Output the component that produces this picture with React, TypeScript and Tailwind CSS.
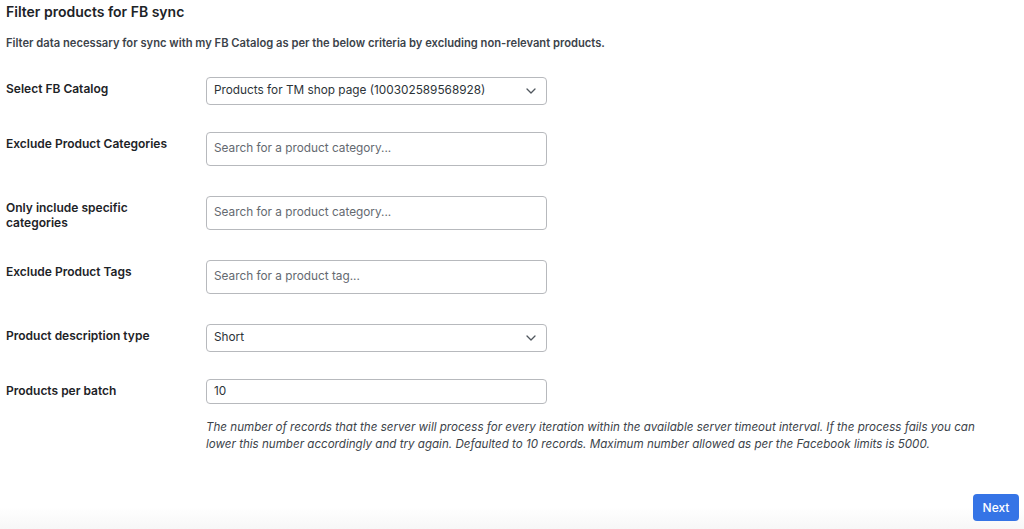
import React from 'react';

const Chevron: React.FC = () => (
  <svg width="10" height="6" viewBox="0 0 10 6" className="shrink-0">
    <path d="M1 1l4 4 4-4" fill="none" stroke="#50575e" strokeWidth="1.3" strokeLinecap="round" strokeLinejoin="round" />
  </svg>
);

const Row: React.FC<{ label: React.ReactNode; gap: string; children: React.ReactNode }> = ({ label, gap, children }) => (
  <div className={`flex ${gap}`}>
    <div className="w-[200px] shrink-0 pt-[4px] text-[12px] leading-[15px] font-semibold text-[#1d2327]">{label}</div>
    <div className="w-[341px]">{children}</div>
  </div>
);

const SelectBox: React.FC<{ value: string }> = ({ value }) => (
  <div className="h-[28px] border border-[#b7b9bd] rounded-[4px] flex items-center justify-between pl-[7px] pr-[10px] text-[11.8px] text-[#2c3338]">
    <span>{value}</span>
    <Chevron />
  </div>
);

const SearchBox: React.FC<{ placeholder: string }> = ({ placeholder }) => (
  <div className="h-[34px] border border-[#b7b9bd] rounded-[4px] flex items-center pl-[7px] text-[11.8px] text-[#646970]">
    {placeholder}
  </div>
);

const App: React.FC = () => {
  return (
    <div className="w-[1024px] h-[529px] bg-white relative overflow-hidden" style={{ fontFamily: 'Inter, "Liberation Sans", sans-serif' }}>
      <div className="pl-[6px] pt-[2px]">
        <h1 className="text-[14px] leading-[20px] font-semibold text-[#1d2327]">Filter products for FB sync</h1>
        <p className="mt-[13px] text-[11.2px] leading-[16px] font-semibold text-[#3c434a]">
          Filter data necessary for sync with my FB Catalog as per the below criteria by excluding non-relevant products.
        </p>

        <div className="mt-[26px] flex flex-col">
          <Row label="Select FB Catalog" gap="">
            <SelectBox value="Products for TM shop page (100302589568928)" />
          </Row>
          <Row label="Exclude Product Categories" gap="mt-[27px]">
            <SearchBox placeholder="Search for a product category..." />
          </Row>
          <Row label={<>Only include specific<br />categories</>} gap="mt-[30px]">
            <SearchBox placeholder="Search for a product category..." />
          </Row>
          <Row label="Exclude Product Tags" gap="mt-[30px]">
            <SearchBox placeholder="Search for a product tag..." />
          </Row>
          <Row label="Product description type" gap="mt-[30px]">
            <SelectBox value="Short" />
          </Row>
          <Row label="Products per batch" gap="mt-[27px]">
            <div className="h-[25px] border border-[#b7b9bd] rounded-[4px] flex items-center pl-[7px] text-[11.8px] text-[#2c3338]">10</div>
          </Row>
          <div className="flex mt-[15px]">
            <div className="w-[200px] shrink-0" />
            <p className="w-[785px] text-[11.6px] leading-[17px] italic text-[#3c434a]">
              The number of records that the server will process for every iteration within the available server timeout interval. If the process fails you can lower this number accordingly and try again. Defaulted to 10 records. Maximum number allowed as per the Facebook limits is 5000.
            </p>
          </div>
        </div>
      </div>

      <div className="absolute left-0 right-0 bottom-0 h-[22px] bg-gradient-to-b from-white to-[#f7f7f7]" />
      <button className="absolute left-[973px] top-[494px] w-[46px] h-[27px] rounded-[4px] bg-[#3574e6] text-white text-[12px] font-medium">
        Next
      </button>
    </div>
  );
};

export default App;
